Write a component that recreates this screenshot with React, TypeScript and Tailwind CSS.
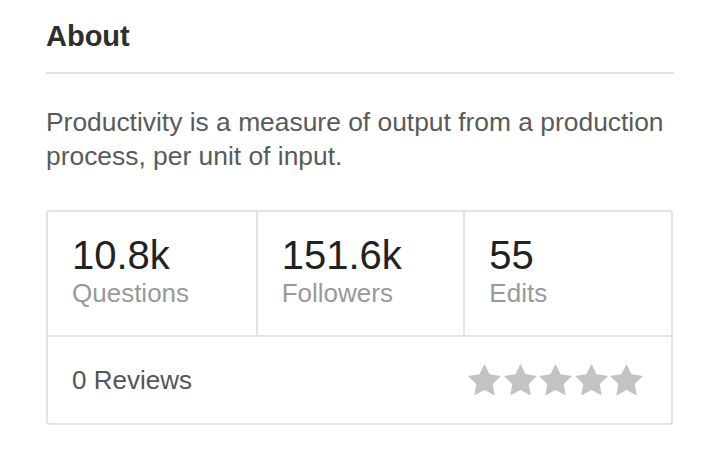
import React from "react";

const Star = () => (
  <svg viewBox="2 2 20 19.02" className="w-[33px] h-[31.4px]" fill="#c3c3c3">
    <path d="M12 2l3.09 6.26L22 9.27l-5 4.87 1.18 6.88L12 17.77l-6.18 3.25L7 14.14 2 9.27l6.91-1.01L12 2z" />
  </svg>
);

const Stat = ({ value, label, first }: { value: string; label: string; first?: boolean }) => (
  <div className={`pl-6 pt-[25px] pb-[22px] ${first ? "" : "border-l-2 border-[#e3e3e3]"}`}>
    <div className="text-[40px] leading-[36px] text-[#222222]">{value}</div>
    <div className="text-[26px] leading-[40px] text-[#999999]">{label}</div>
  </div>
);

export default function App() {
  return (
    <div className="w-[724px] h-[468px] bg-white" style={{ fontFamily: '"Liberation Sans", Arial, sans-serif' }}>
      <div className="ml-[46px] w-[628px]">
        <div className="pt-[19px] pb-[19px] border-b-2 border-[#e3e3e3]">
          <h2 className="text-[29px] leading-[34px] font-bold text-[#2e2e2e]">About</h2>
        </div>
        <p className="mt-[31px] text-[26.4px] leading-[34px] text-[#5a5a5a]">
          Productivity is a measure of output from a production process, per unit of input.
        </p>
        <div className="mt-[37px] w-[627px] border-2 border-[#e3e3e3] rounded-[4px]">
          <div className="grid grid-cols-3 border-b-2 border-[#e3e3e3]">
            <Stat value="10.8k" label="Questions" first />
            <Stat value="151.6k" label="Followers" />
            <Stat value="55" label="Edits" />
          </div>
          <div className="h-[86px] flex items-center justify-between pl-6 pr-[28px]">
            <span className="text-[26px] text-[#555555]">0 Reviews</span>
            <div className="flex gap-[2.5px]">
              <Star />
              <Star />
              <Star />
              <Star />
              <Star />
            </div>
          </div>
        </div>
      </div>
    </div>
  );
}
